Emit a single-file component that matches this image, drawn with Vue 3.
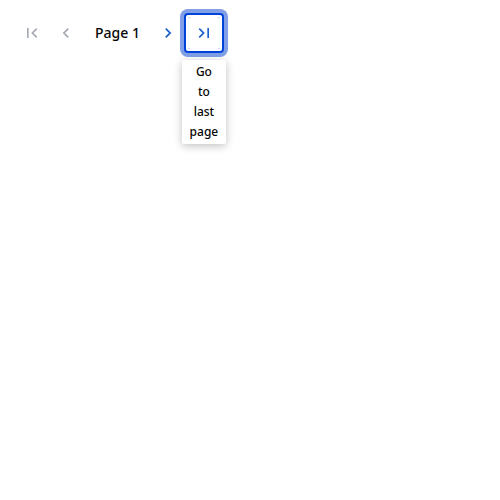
<script setup>
import { ref } from 'vue'

const page = ref(1)
</script>

<template>
  <main class="view">
    <nav class="pagination" aria-label="Pagination">
      <button class="nav-button" type="button" aria-label="Go to first page" disabled>
        <svg class="icon" viewBox="0 0 24 24" aria-hidden="true">
          <path d="M18.41 16.59 13.82 12l4.59-4.59L17 6l-6 6 6 6zM6 6h2v12H6z" />
        </svg>
      </button>
      <button class="nav-button" type="button" aria-label="Go to previous page" disabled>
        <svg class="icon" viewBox="0 0 24 24" aria-hidden="true">
          <path d="M15.41 7.41 14 6l-6 6 6 6 1.41-1.41L10.83 12z" />
        </svg>
      </button>
      <span class="page-label">Page {{ page }}</span>
      <button class="nav-button" type="button" aria-label="Go to next page">
        <svg class="icon" viewBox="0 0 24 24" aria-hidden="true">
          <path d="M10 6 8.59 7.41 13.17 12l-4.58 4.59L10 18l6-6z" />
        </svg>
      </button>
      <div class="tooltip-anchor">
        <button class="nav-button focused" type="button" aria-describedby="last-page-tip" aria-label="Go to last page">
          <svg class="icon" viewBox="0 0 24 24" aria-hidden="true">
            <path d="M5.59 7.41 10.18 12l-4.59 4.59L7 18l6-6-6-6zM16 6h2v12h-2z" />
          </svg>
        </button>
        <div id="last-page-tip" class="tooltip" role="tooltip">Go to last page</div>
      </div>
    </nav>
  </main>
</template>

<style>
body {
  background: #fff;
}
</style>

<style scoped>
.view {
  min-height: 100vh;
}

.pagination {
  display: flex;
  align-items: center;
  padding: 13px 16px;
  font-family: "Noto Sans", "Open Sans", sans-serif;
  font-weight: 500;
  color: #050505;
}

.nav-button {
  box-sizing: border-box;
  display: flex;
  align-items: center;
  justify-content: center;
  width: 32px;
  height: 40px;
  padding: 0;
  border: 0;
  border-radius: 4px;
  background: transparent;
  color: #1a5fcb;
}

.nav-button:disabled {
  color: #a6abb3;
}

.nav-button:disabled + .nav-button:disabled {
  margin-left: 2px;
}

.focused {
  width: 40px;
  border: 2px solid #0043d9;
  background:
    linear-gradient(#ccd9f7, #ccd9f7) 2px 2px / 2px 1px no-repeat,
    linear-gradient(#ccd9f7, #ccd9f7) 32px 2px / 2px 1px no-repeat,
    linear-gradient(#ccd9f7, #ccd9f7) 2px 33px / 2px 1px no-repeat,
    linear-gradient(#ccd9f7, #ccd9f7) 32px 33px / 2px 1px no-repeat,
    #fff;
  box-shadow: 0 0 0 4px #809fe6;
  outline: none;
}

.icon {
  width: 20px;
  height: 20px;
  flex: none;
  fill: currentColor;
}

.page-label {
  padding: 0 12px 0 13px;
  font-size: 14px;
  line-height: 20px;
  white-space: nowrap;
}

.tooltip-anchor {
  position: relative;
}

.tooltip {
  position: absolute;
  top: 47px;
  left: 50%;
  box-sizing: border-box;
  width: 44px;
  padding: 2px 7px;
  border-radius: 2px;
  background: #fff;
  box-shadow: 0 2px 8px rgba(0, 0, 0, 0.25);
  font-size: 12px;
  line-height: 20px;
  text-align: center;
  transform: translateX(-50%);
}
</style>
